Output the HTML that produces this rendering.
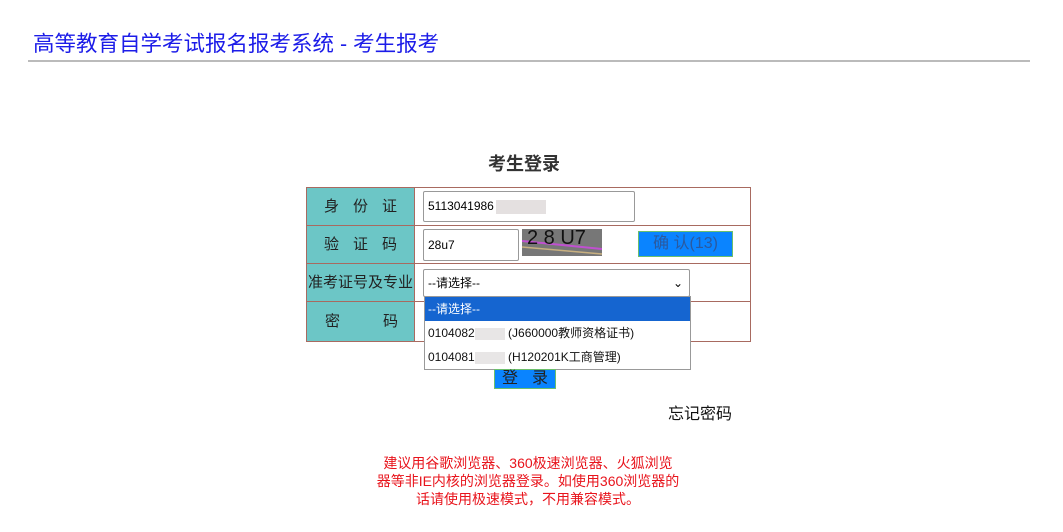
<!DOCTYPE html>
<html><head><meta charset="utf-8"><style>
body{margin:0;width:1063px;height:532px;background:#fff;font-family:"Liberation Sans","Noto Sans CJK SC",sans-serif;position:relative;overflow:hidden}
.a{position:absolute;white-space:nowrap}
.title{left:33px;top:27px;font-size:21.5px;color:#1c1ce8}
.hr{left:28px;top:60px;width:1002px;height:2px;background:#bbb}
.lbl{background:#6cc6c6;left:307px;width:108px;font-size:15px;color:#222;text-align:center;border-right:1px solid #a86a60;box-sizing:border-box}
.row{left:306px;width:445px;border:1px solid #a86a60;box-sizing:border-box}
.inp{background:#fff;border:1px solid #999;border-radius:2px;box-sizing:border-box;font-size:12px;color:#000;padding-left:4px}
</style></head><body>
<div class="a title">高等教育自学考试报名报考系统 - 考生报考</div>
<div class="a hr"></div>
<div class="a" style="left:488px;top:150px;font-size:18px;font-weight:bold;color:#333">考生登录</div>

<div class="a row" style="top:187px;height:39px"></div>
<div class="a row" style="top:225px;height:39px"></div>
<div class="a row" style="top:263px;height:39px"></div>
<div class="a row" style="top:301px;height:41px"></div>
<div class="a lbl" style="top:188px;height:37px;line-height:37px;letter-spacing:14px;padding-left:14px">身份证</div>
<div class="a lbl" style="top:226px;height:37px;line-height:37px;letter-spacing:14px;padding-left:14px">验证码</div>
<div class="a lbl" style="top:264px;height:37px;line-height:37px">准考证号及专业</div>
<div class="a lbl" style="top:302px;height:39px;line-height:39px"><span class="a" style="left:18px">密</span><span class="a" style="left:76px">码</span></div>

<div class="a inp" style="left:423px;top:191px;width:212px;height:31px;line-height:29px">5113041986<span style="display:inline-block;width:50px;height:14px;background:#e4e0e0;vertical-align:middle;margin-left:2px"></span></div>
<div class="a inp" style="left:423px;top:229px;width:96px;height:32px;line-height:30px">28u7</div>
<div class="a" style="left:522px;top:229px;width:80px;height:27px;background:#777;overflow:hidden">
<svg width="80" height="27" style="position:absolute;left:0;top:0"><line x1="0" y1="12" x2="80" y2="20" stroke="#c050d0" stroke-width="2"/><line x1="0" y1="18" x2="80" y2="25" stroke="#c8b080" stroke-width="1.5"/></svg>
<div class="a" style="left:5px;top:-2px;font-size:20px;color:#111;letter-spacing:0px">2 8 U7</div></div>
<div class="a" style="left:638px;top:231px;width:95px;height:26px;background:#0a84ff;border:1px solid #6cbf6c;box-sizing:border-box;color:#2a5aa0;font-size:16px;line-height:24px;text-align:center">确 认(13)</div>

<div class="a inp" style="left:423px;top:269px;width:267px;height:28px;line-height:26px">--请选择--<span style="position:absolute;right:6px;top:0;font-size:12px">&#8964;</span></div>
<div class="a" style="left:424px;top:296px;width:267px;height:74px;background:#fff;border:1px solid #999;box-sizing:border-box;font-size:12px;color:#111">
<div style="background:#1565d0;color:#fff;height:24px;line-height:24px;padding-left:3px">--请选择--</div>
<div style="height:24px;line-height:24px;padding-left:3px">0104082<span style="display:inline-block;width:30px;height:12px;background:#e8e6e6;vertical-align:middle"></span> (J660000教师资格证书)</div>
<div style="height:24px;line-height:24px;padding-left:3px">0104081<span style="display:inline-block;width:30px;height:12px;background:#e8e6e6;vertical-align:middle"></span> (H120201K工商管理)</div>
</div>
<div class="a" style="left:494px;top:369px;width:62px;height:20px;background:#0a84ff;border:1px solid #6cbf6c;box-sizing:border-box;font-size:16px;line-height:17px;color:#222;letter-spacing:14px;padding-left:7px">登录</div>
<div class="a" style="left:668px;top:400px;font-size:16px;color:#111">忘记密码</div>
<div class="a" style="left:370px;top:454px;width:316px;white-space:normal;text-align:center;font-size:14px;line-height:18px;color:#e8141c">建议用谷歌浏览器、360极速浏览器、火狐浏览<br>器等非IE内核的浏览器登录。如使用360浏览器的<br>话请使用极速模式，不用兼容模式。</div>
</body></html>
